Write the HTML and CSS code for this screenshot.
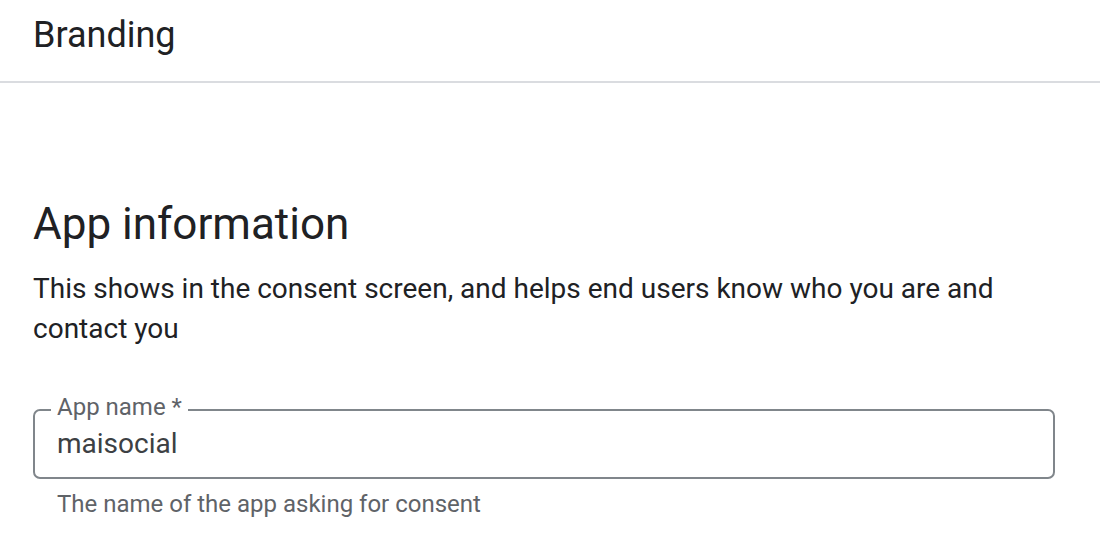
FILE: index.html
```html
<!DOCTYPE html>
<html lang="en">
<head>
<meta charset="utf-8">
<title>Branding</title>
<link rel="stylesheet" href="styles.css">
</head>
<body>
<header class="page-header">
  <h1 class="page-title">Branding</h1>
</header>
<main class="content">
  <section class="section">
    <h2 class="section-title">App information</h2>
    <p class="section-desc">This shows in the consent screen, and helps end users know who you are and contact you</p>
    <div class="field">
      <div class="field-box">
        <span class="field-label">App name *</span>
        <span class="field-value">maisocial</span>
      </div>
      <div class="field-hint">The name of the app asking for consent</div>
    </div>
  </section>
</main>
</body>
</html>
```
FILE: styles.css
```css
html, body {
  margin: 0;
  padding: 0;
  background: #ffffff;
}
body {
  font-family: Roboto, "Liberation Sans", Arial, sans-serif;
  color: #202124;
  width: 1100px;
  overflow: hidden;
}
.page-header {
  border-bottom: 2px solid #dadce0;
  padding: 15px 33px 0;
  box-sizing: content-box;
  height: 66px;
}
.page-title {
  margin: 0;
  font-size: 36px;
  line-height: 40px;
  font-weight: 400;
  color: #202124;
}
.content {
  padding: 0 45px 0 33px;
}
.section-title {
  margin: 113px 0 0;
  font-size: 44px;
  line-height: 56px;
  font-weight: 400;
  color: #202124;
}
.section-desc {
  margin: 17px 0 0;
  font-size: 28px;
  line-height: 40px;
  color: #202124;
}
.field {
  margin-top: 60px;
}
.field-box {
  position: relative;
  border: 2px solid #80868b;
  border-radius: 7px;
  height: 70px;
  box-sizing: border-box;
  padding: 17px 22px 0;
}
.field-label {
  position: absolute;
  top: -18px;
  left: 16px;
  padding: 0 6px;
  background: #ffffff;
  font-size: 24px;
  line-height: 28px;
  color: #5f6368;
}
.field-value {
  display: block;
  font-size: 28px;
  line-height: 32px;
  color: #3c4043;
}
.field-hint {
  padding: 11px 24px 0;
  font-size: 24px;
  line-height: 28px;
  color: #5f6368;
}
```
